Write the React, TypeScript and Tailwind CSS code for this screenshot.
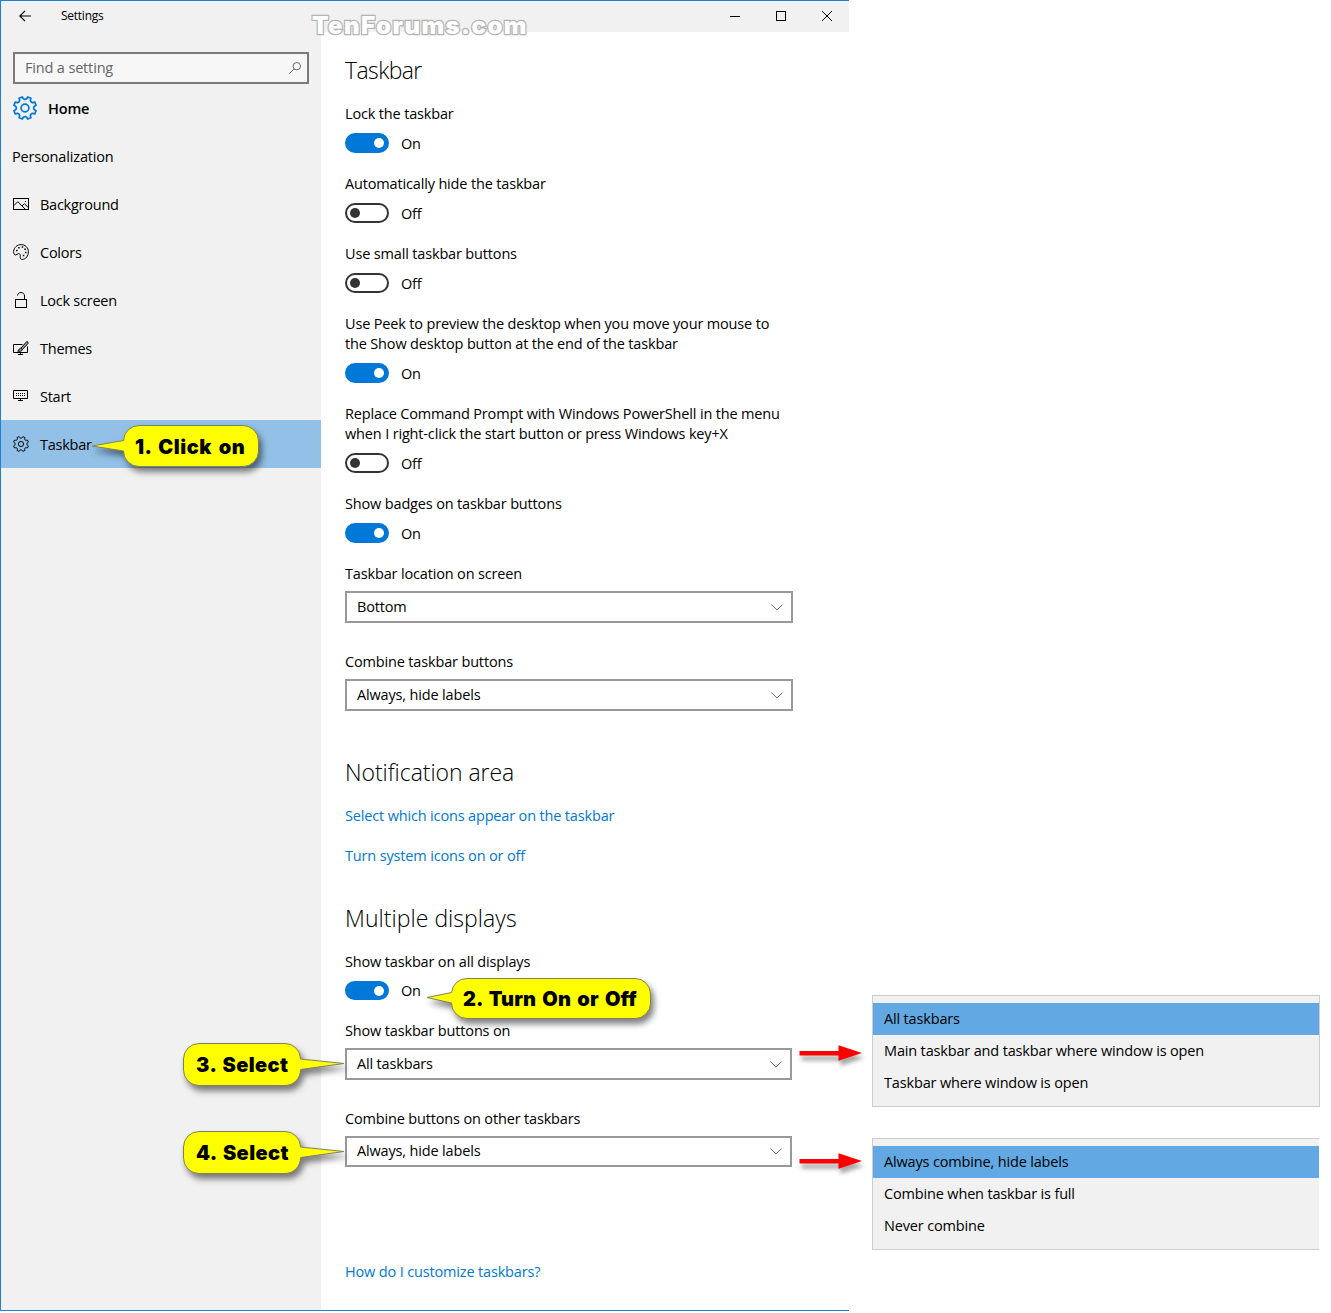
import type { ReactNode } from 'react';

// Cog outline: 8 teeth separated by round notches, with one notch at the top
const cogPath = (() => {
  const point = (deg: number, radius: number) => {
    const rad = (deg * Math.PI) / 180;
    return `${(12 + radius * Math.sin(rad)).toFixed(2)} ${(12 - radius * Math.cos(rad)).toFixed(2)}`;
  };
  let d = `M${point(14, 11.4)}`;
  for (let i = 0; i < 8; i++) {
    const notch = (i + 1) * 45;
    d += ` L${point(notch - 14, 11.4)} L${point(notch - 12, 10.3)} A2.3 2.3 0 0 0 ${point(notch + 12, 10.3)} L${point(notch + 14, 11.4)}`;
  }
  return `${d}Z`;
})();

const CogIcon = ({ className, strokeWidth }: { className: string; strokeWidth: number }) => (
  <svg viewBox="0 0 24 24" className={className} fill="none" stroke="currentColor" strokeWidth={strokeWidth} strokeLinejoin="round">
    <path d={cogPath} />
    <circle cx="12" cy="12" r="3.9" />
  </svg>
);

const NavSvg = ({ children }: { children: ReactNode }) => (
  <svg viewBox="0 0 16 16" className="w-4 h-4 shrink-0" fill="none" stroke="currentColor" strokeWidth="1">
    {children}
  </svg>
);

const navItems = [
  {
    label: 'Background',
    icon: (
      <NavSvg>
        <rect x="0.5" y="2.5" width="15" height="11" />
        <path d="M1 9.5 4.8 5.7 12 13M9 10l2.4-2.3L15.2 11.5" />
        <path d="M12 5.5h1" />
      </NavSvg>
    ),
  },
  {
    label: 'Colors',
    icon: (
      <NavSvg>
        <path d="M.6 7.4C1 3.4 4.2.6 8.200.6c4.100 0 7.200 3.100 7.200 7.200 0 4.200-2.800 7.600-6.200 7.600-1.700 0-2.200-1.300-2-2.700.3-1.800-.2-3.100-1.600-3.100-1.300 0-1.800 1.400-3 1.400C1.200 11 .5 9.300.6 7.400Z" />
        <path d="M3 6.500h1.500M5.200 3.800h1.500M8.700 3.100h1.500M11.300 5.300h1.500M12 8.500h1.500M9.800 11.500h1.500" strokeWidth="1.500" />
      </NavSvg>
    ),
  },
  {
    label: 'Lock screen',
    icon: (
      <NavSvg>
        <rect x="2.500" y="7.500" width="11" height="8" />
        <path d="M4.500 3.500C4.800 1.600 6.100.5 8 .5c2.200 0 3.500 1.500 3.500 3.500v3.500" />
      </NavSvg>
    ),
  },
  {
    label: 'Themes',
    icon: (
      <NavSvg>
        <path d="M9.500 4.500h-9v8h14v-6M7.500 12.500v2M5 14.500h5" />
        <path d="M15 2.200 13.800 1.500 7.800 8.200l1.500 1.400L15 3.500ZM7.600 8.300c-2 .2-1.400 2.300-3 2.600 1.700.9 4.300.6 4.700-1.300" fill="#999" />
      </NavSvg>
    ),
  },
  {
    label: 'Start',
    icon: (
      <NavSvg>
        <path d="M.5 2.500h14v8H.5ZM7.500 10.500v2M5 12.500h5" />
        <path d="M3 5.500h9.500M3 7.500h9.500" strokeDasharray="1 1" />
      </NavSvg>
    ),
  },
  { label: 'Taskbar', icon: <CogIcon className="w-4 h-4 shrink-0" strokeWidth={1.4} />, active: true },
];

const Toggle = ({ on, className = 'h-5', labelClassName = 'pt-0.5' }: { on: boolean; className?: string; labelClassName?: string }) => (
  <div className="flex items-center gap-3">
    <button
      className={`w-11 flex items-center rounded-full border-2 ${className} ${
        on ? 'justify-end bg-[#0078d7] border-[#0078d7] pr-[3px]' : 'border-[#333] pl-[3px]'
      }`}
    >
      <span className={`w-2.5 h-2.5 rounded-full ${on ? 'bg-white' : 'bg-[#333]'}`} />
    </button>
    <span className={`leading-5 -my-0.5 ${labelClassName}`}>{on ? 'On' : 'Off'}</span>
  </div>
);

const Setting = ({ label, on }: { label: ReactNode; on: boolean }) => (
  <div className="mb-[21px]">
    <p className="mb-[9px]">{label}</p>
    <Toggle on={on} />
  </div>
);

const Select = ({ label, value, className }: { label: string; value: string; className: string }) => (
  <div>
    <p className="mb-[7px]">{label}</p>
    <div className={`flex items-center justify-between border-2 border-[#999] pl-2.5 pr-2 ${className}`}>
      <span>{value}</span>
      <svg viewBox="0 0 12 7" className="w-3 h-[7px]" fill="none" stroke="#666">
        <path d="M.4.5 6 6.100 11.600.5" />
      </svg>
    </div>
  </div>
);

const Heading = ({ children, className = '' }: { children: ReactNode; className?: string }) => (
  <h2 className={`text-[23px] leading-[30px] font-light mb-[19px] ${className}`}>{children}</h2>
);

const Callout = ({ className, path, children }: { className: string; path: string; children: ReactNode }) => (
  <div
    className={`absolute z-10 flex items-center whitespace-nowrap font-['Inter',sans-serif] font-black text-[20px] leading-6 ${className}`}
  >
    <svg className="absolute inset-0 w-full h-full overflow-visible drop-shadow-[3px_5px_3px_rgba(0,0,0,0.5)]">
      <path d={path} fill="#ff0" stroke="#808060" strokeWidth="1" />
    </svg>
    <span className="relative">{children}</span>
  </div>
);

const RedArrow = ({ className }: { className: string }) => (
  <svg
    viewBox="0 0 64 16"
    className={`absolute w-16 h-4 overflow-visible drop-shadow-[2px_5px_2px_rgba(0,0,0,0.35)] ${className}`}
  >
    <path d="M.5 6h39V.3L63 8 39.500 15.700v-5.200H.5Z" fill="#f00" />
  </svg>
);

const OptionList = ({ options, className }: { options: string[]; className: string }) => (
  <ul className={`border border-[#ccc] bg-[#f1f1f1] py-[7px] ${className}`}>
    {options.map((option, index) => (
      <li key={option} className={`h-8 flex items-center pl-[11px] ${index === 0 ? 'bg-[#62a8e2]' : ''}`}>
        {option}
      </li>
    ))}
  </ul>
);

const App: React.FC = () => {
  return (
    <div className="relative flex w-[1331px] h-[1313px] overflow-hidden bg-white text-black font-['Open_Sans','Noto_Sans',sans-serif] text-[14.5px] leading-5 tracking-[-0.16px]">
      {/* Settings window */}
      <div className="w-[849px] h-[1311px] flex flex-col border-t border-l border-b border-[#1883d7]">
        <header className="h-[31px] shrink-0 bg-[#f1f1f1] flex items-center overflow-hidden pb-px">
          <svg viewBox="0 0 12 12" className="w-3 h-3 ml-[18px] mr-[30px] shrink-0" fill="none" stroke="#000" strokeWidth="1.200">
            <path d="M12 6H.8M6 .8.8 6 6 11.200" />
          </svg>
          <span className="text-[12px] leading-4 tracking-[-0.25px]">Settings</span>
          <div className="flex ml-auto -mr-px shrink-0">
            <button className="w-[46px] h-[30px] flex items-center justify-center">
              <svg viewBox="0 0 10 10" className="w-2.5 h-2.5" stroke="#000" fill="none">
                <path d="M0 5.500h10" />
              </svg>
            </button>
            <button className="w-[46px] h-[30px] flex items-center justify-center">
              <svg viewBox="0 0 10 10" className="w-2.5 h-2.5" stroke="#000" fill="none">
                <rect x=".5" y=".5" width="9" height="9" />
              </svg>
            </button>
            <button className="w-[46px] h-[30px] flex items-center justify-center">
              <svg viewBox="0 0 10 10" className="w-2.5 h-2.5" stroke="#000" fill="none">
                <path d="M0 0l10 10M10 0 0 10" />
              </svg>
            </button>
          </div>
        </header>

        <div className="flex flex-1">
          {/* Sidebar */}
          <aside className="w-80 bg-[#f1f1f1] pt-5">
            <div className="ml-3 w-[296px] h-8 border-2 border-[#7a7a7a] bg-[#f7f7f7] flex items-center justify-between pl-2.5 pr-1.5 text-[#666]">
              <span>Find a setting</span>
              <svg viewBox="0 0 12 12" className="w-3 h-3" fill="none" stroke="#666">
                <circle cx="7.800" cy="4.200" r="3.700" />
                <path d="M5.200 6.800.3 11.700" />
              </svg>
            </div>
            <div className="flex items-center h-12 pl-3 gap-[11px] font-semibold">
              <CogIcon className="w-6 h-6 text-[#0078d7]" strokeWidth={1.7} />
              <span className="pt-0.5">Home</span>
            </div>
            <div className="h-12 flex items-center pl-[11px] pt-0.5">Personalization</div>
            <nav>
              {navItems.map((item) => (
                <a key={item.label} className={`h-12 flex items-center pl-3 gap-[11px] ${item.active ? 'bg-[#92c0e6]' : ''}`}>
                  {item.icon}
                  <span className="pt-0.5 tracking-[-0.25px]">{item.label}</span>
                </a>
              ))}
            </nav>
          </aside>

          {/* Taskbar page */}
          <main className="flex-1 pl-6 pt-[23px]">
            <Heading className="tracking-[-0.6px]">Taskbar</Heading>
            <Setting label="Lock the taskbar" on />
            <Setting label="Automatically hide the taskbar" on={false} />
            <Setting label="Use small taskbar buttons" on={false} />
            <Setting
              label={
                <>
                  Use Peek to preview the desktop when you move your mouse to
                  <br />
                  the Show desktop button at the end of the taskbar
                </>
              }
              on
            />
            <Setting
              label={
                <>
                  Replace Command Prompt with Windows PowerShell in the menu
                  <br />
                  when I right-click the start button or press Windows key+X
                </>
              }
              on={false}
            />
            <Setting label="Show badges on taskbar buttons" on />

            <div className="flex flex-col gap-[29px] mb-[46px]">
              <Select label="Taskbar location on screen" value="Bottom" className="w-[448px] h-8" />
              <Select label="Combine taskbar buttons" value="Always, hide labels" className="w-[448px] h-8" />
            </div>

            <Heading className="tracking-[-0.05px]">Notification area</Heading>
            <div className="flex flex-col gap-5 mb-[37px] text-[#0078d7]">
              <a>Select which icons appear on the taskbar</a>
              <a>Turn system icons on or off</a>
            </div>

            <Heading className="tracking-[0.04px]">Multiple displays</Heading>
            <p className="mb-[9px]">Show taskbar on all displays</p>
            <Toggle on className="h-[19px]" labelClassName="pt-px" />
            <div className="flex flex-col gap-[29px] mt-[21px] mb-[95px]">
              <Select label="Show taskbar buttons on" value="All taskbars" className="w-[447px] h-8" />
              <Select label="Combine buttons on other taskbars" value="Always, hide labels" className="w-[447px] h-[31px] pb-px" />
            </div>
            <a className="text-[#0078d7]">How do I customize taskbars?</a>
          </main>
        </div>
      </div>

      {/* Opened drop-down lists */}
      <div className="pl-[23px] pt-[995px] flex flex-col gap-[31px]">
        <OptionList
          options={['All taskbars', 'Main taskbar and taskbar where window is open', 'Taskbar where window is open']}
          className="w-[448px]"
        />
        <OptionList
          options={['Always combine, hide labels', 'Combine when taskbar is full', 'Never combine']}
          className="w-[447px] border-r-0"
        />
      </div>

      {/* Watermark over the title bar */}
      <div className="absolute left-[312px] top-[10px] font-['Inter',sans-serif] font-black text-[24px] leading-8 tracking-[1.45px] text-white [-webkit-text-stroke:2.5px_#b4b4b4] [paint-order:stroke_fill]">
        TenForums.com
      </div>

      {/* Steps */}
      <Callout
        className="left-[123px] top-[425px] w-[136px] h-[42px] pl-3 pt-px tracking-[0.5px] [word-spacing:2.5px]"
        path="M16 .5H120a15.500 15.500 0 0 1 15.500 15.500V26a15.500 15.500 0 0 1-15.500 15.500H16A15.500 15.500 0 0 1 .5 26L-31 21 .5 15.500A15.500 15.500 0 0 1 16 .5Z"
      >
        1. Click on
      </Callout>
      <Callout
        className="left-[451px] top-[978px] w-[200px] h-[41px] pl-3 pt-px tracking-[0.1px] [word-spacing:2.2px]"
        path="M16 .5H184a15.500 15.500 0 0 1 15.500 15.500V25a15.500 15.500 0 0 1-15.500 15.500H16A15.500 15.500 0 0 1 .5 25L-24 19.500.5 14.500A15.500 15.500 0 0 1 16 .5Z"
      >
        2. Turn On or Off
      </Callout>
      <Callout
        className="left-[183px] top-[1043px] w-[118px] h-[43px] pl-[13px] pt-px tracking-[0.4px] [word-spacing:2px]"
        path="M16 .5H102A15.500 15.500 0 0 1 117.500 16L161 20.500 117.500 26.500A15.500 15.500 0 0 1 102 42.500H16A15.500 15.500 0 0 1 .5 27V16A15.500 15.500 0 0 1 16 .5Z"
      >
        3. Select
      </Callout>
      <Callout
        className="left-[183px] top-[1131px] w-[118px] h-[43px] pl-[13px] pt-px tracking-[0.4px] [word-spacing:2px]"
        path="M16 .5H102A15.500 15.500 0 0 1 117.500 16L161 20.500 117.500 26.500A15.500 15.500 0 0 1 102 42.500H16A15.500 15.500 0 0 1 .5 27V16A15.500 15.500 0 0 1 16 .5Z"
      >
        4. Select
      </Callout>
      <RedArrow className="left-[799px] top-[1045px]" />
      <RedArrow className="left-[799px] top-[1153px]" />
    </div>
  );
};

export default App;
